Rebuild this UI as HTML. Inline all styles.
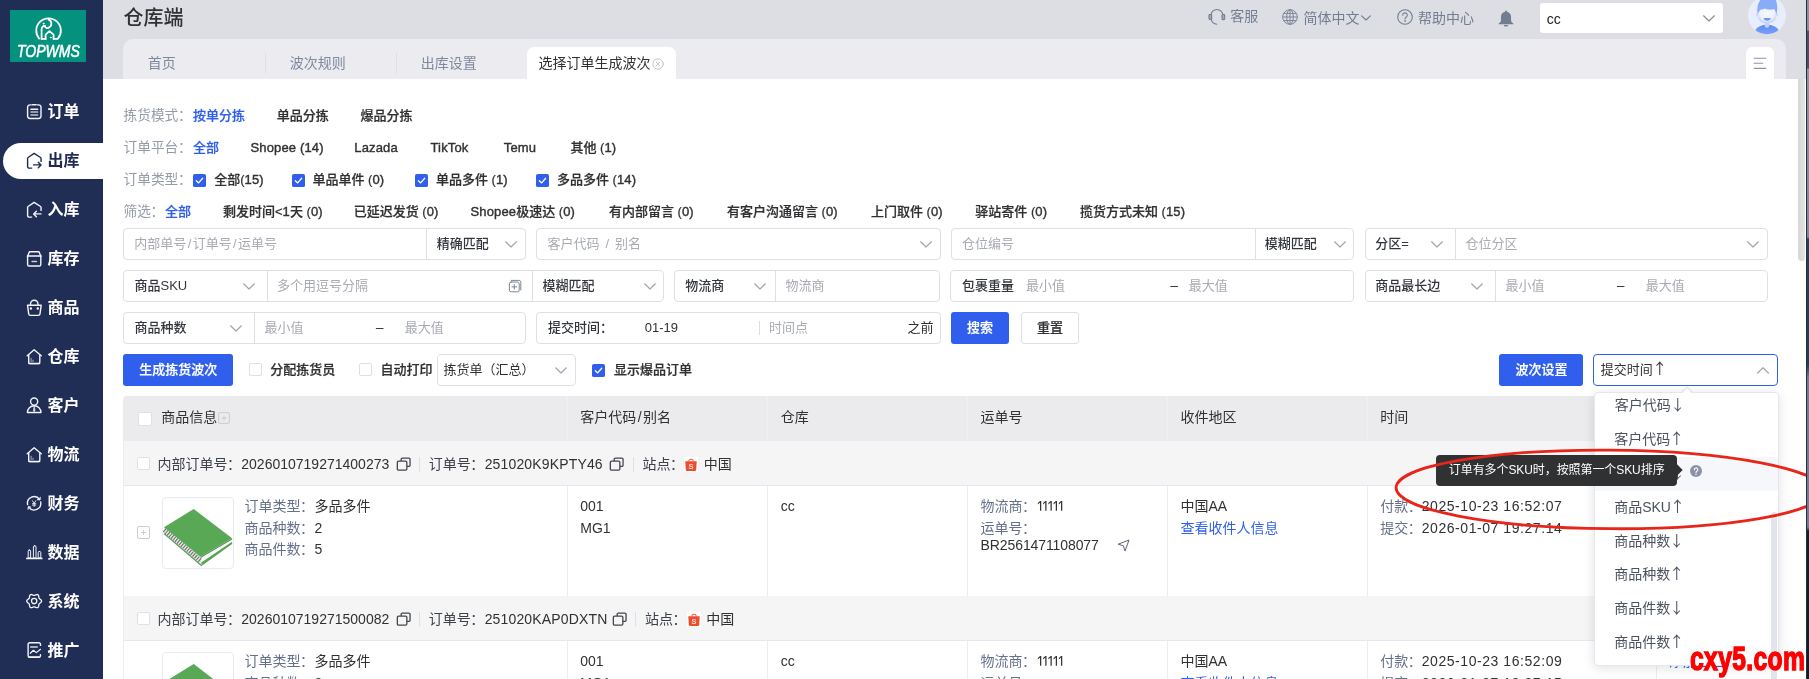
<!DOCTYPE html>
<html lang="zh-CN"><head><meta charset="utf-8"><title>仓库端 - 选择订单生成波次</title>
<style>
html,body{margin:0;padding:0}
body{width:1809px;height:679px;overflow:hidden;position:relative;background:#fff;
 font-family:"Liberation Sans","Noto Sans CJK SC",sans-serif;font-size:13px;color:#303133}
#pg{position:absolute;left:0;top:0;width:1809px;height:679px;overflow:hidden;will-change:transform}
.a{position:absolute}
.t{position:absolute;white-space:nowrap;line-height:20px;height:20px}
.bx{position:absolute;box-sizing:border-box;border:1px solid #dcdfe6;border-radius:4px;background:#fff}
.m{font-weight:500;-webkit-text-stroke:.22px currentColor}
.b{font-weight:700}
.g{color:#959baa;font-size:13.700px}
.bl{color:#2f5fec}
.ph{color:#a8abb2}
.f14{font-size:14px}
.lb{color:#66708a}
.ls{-webkit-text-stroke:.38px currentColor;letter-spacing:.15px}
.g .cl{margin-left:-.4px;margin-right:.4px}
.f14 .cl{margin-left:-.5px;margin-right:.5px}
.sv{font-weight:500;color:#33363c}
.ar{font-family:"Noto Sans CJK SC",sans-serif;margin-left:-.5px;font-size:15px;line-height:1}
.dt{letter-spacing:.56px}
.sl{margin:0 1.400px}
.btn{position:absolute;box-sizing:border-box;border-radius:3px;background:#2f5fec}
</style></head><body><div id="pg">
<div class="a" style="left:0;top:0;width:103px;height:679px;background:#202d54"></div>
<div class="a" style="left:103px;top:0;width:1703px;height:79px;background:#dddee3"></div>
<div class="a" style="left:1806px;top:0;width:3px;height:679px;background:linear-gradient(180deg,#8790a5 0,#8790a5 30px,#4a5070 31px,#4a5070 68px,#8b93a6 69px,#7d87a0 237px,#1d4565 239px,#1b4060 365px,#6f7c9a 378px,#6f7c9a 527px,#10202f 531px,#0e1c2c 679px)"></div>
<div class="a" style="left:1806px;top:0;width:1.300px;height:679px;background:#2b2e36"></div>
<div class="a" style="left:123px;top:39px;width:1663px;height:40px;background:#ebebf0;border-radius:10px 10px 0 0"></div>
<div class="a" style="left:1798.200px;top:79px;width:7.300px;height:182.200px;background:linear-gradient(90deg,#d6d6d6,#e4e4e4);border-radius:0 0 3.600px 3.600px"></div>
<div class="a" style="left:10px;top:10px;width:76px;height:52px;background:#04927f"></div>
<svg class="a" style="left:34px;top:17px" width="29" height="24" viewBox="0 0 29 24" fill="none" stroke="#fff" stroke-width="1.750" stroke-linecap="round" stroke-linejoin="round">
<path d="M5.2 21.6A12.3 12.3 0 1 1 23.9 21.6"/>
<path d="M14.6 2.6c3.6 1.3 3.7 6.2 .2 8.0c-1.8 .9-3.6 .2-3.9-1.2"/>
<path d="M7.6 21.9V12.2c0-2.2 1.6-3.6 3.4-3.4"/>
<path d="M11.6 21.9v-4.2l3.8-3.6l4.2 3.6v4.2"/>
<path d="M7.6 21.9h4M19.6 21.9h3.6"/>
<circle cx="9.6" cy="6.6" r=".6" fill="#fff" stroke-width=".8"/><circle cx="16.8" cy="20.4" r=".5" fill="#fff" stroke-width=".8"/>
</svg>
<span class="t" style="left:17px;top:41.5px;font-size:17px;font-style:italic;color:#fff;transform-origin:0 50%;transform:scaleX(.825);-webkit-text-stroke:.55px #fff;letter-spacing:0">TOPWMS</span>
<div class="a" style="left:3px;top:143px;width:101px;height:36px;background:#fff;border-radius:18px 0 0 18px"></div>
<svg class="a" style="left:26px;top:103px" width="17" height="18" viewBox="0 0 17 18" fill="none" stroke="#f4f5f9" stroke-width="1.400" stroke-linecap="round" stroke-linejoin="round"><path d="M5.200 1.900H4a2.400 2.400 0 0 0-2.400 2.400v8.800a2.400 2.400 0 0 0 2.400 2.400h8.600a2.400 2.400 0 0 0 2.400-2.400V4.300a2.400 2.400 0 0 0-2.400-2.400h-1.200"/><path d="M6.500 1.800h3.600"/><path d="M4.900 6.300h6.800"/><path d="M4.900 9h6.800M4.900 12h6.800" opacity=".75"/></svg>
<span class="t b" style="left:47.6px;top:101.30px;font-size:16px;color:#fff;line-height:22px;height:22px">订单</span>
<svg class="a" style="left:26px;top:152px" width="17" height="18" viewBox="0 0 17 18" fill="none" stroke="#1f2a55" stroke-width="1.400" stroke-linecap="round" stroke-linejoin="round"><path d="M5.700 16.100H3.200a1.600 1.600 0 0 1-1.600-1.600V6.400a1.100 1.100 0 0 1 .5-.9L8.150 1.400l6.400 4.100a1.100 1.100 0 0 1 .5.900V9.400"/><path d="M7.600 12.900h7.100M12.300 10.200l2.700 2.700l-2.700 2.800"/></svg>
<span class="t b" style="left:47.6px;top:150.30px;font-size:16px;color:#1f2a55;line-height:22px;height:22px">出库</span>
<svg class="a" style="left:26px;top:201px" width="17" height="18" viewBox="0 0 17 18" fill="none" stroke="#f4f5f9" stroke-width="1.400" stroke-linecap="round" stroke-linejoin="round"><path d="M5.700 16.100H3.200a1.600 1.600 0 0 1-1.600-1.600V6.400a1.100 1.100 0 0 1 .5-.9L8.150 1.400l6.400 4.100a1.100 1.100 0 0 1 .5.900V9.400"/><path d="M15 12.900H7.900M10.400 10.200l-2.700 2.700l2.700 2.800"/></svg>
<span class="t b" style="left:47.6px;top:199.30px;font-size:16px;color:#fff;line-height:22px;height:22px">入库</span>
<svg class="a" style="left:26px;top:250px" width="17" height="18" viewBox="0 0 17 18" fill="none" stroke="#f4f5f9" stroke-width="1.400" stroke-linecap="round" stroke-linejoin="round"><path d="M1.700 6L3.400 1.800h9.600L14.700 6"/><path d="M1.600 6h13.200" stroke-width="1.700"/><path d="M1.600 6v8.400a1.600 1.600 0 0 0 1.600 1.600h10a1.600 1.600 0 0 0 1.600-1.600V6"/><path d="M6 11.500h4.500" opacity=".8"/></svg>
<span class="t b" style="left:47.6px;top:248.30px;font-size:16px;color:#fff;line-height:22px;height:22px">库存</span>
<svg class="a" style="left:26px;top:299px" width="17" height="18" viewBox="0 0 17 18" fill="none" stroke="#f4f5f9" stroke-width="1.400" stroke-linecap="round" stroke-linejoin="round"><path d="M4.500 6V5a3.750 3.750 0 0 1 7.500 0v1"/><path d="M1.500 6.200h13.700l-1.200 8.700a1.700 1.700 0 0 1-1.700 1.500H4.400a1.700 1.700 0 0 1-1.700-1.500z"/><circle cx="4.900" cy="9.400" r=".55" fill="#f4f5f9"/><circle cx="11.800" cy="9.400" r=".55" fill="#f4f5f9"/></svg>
<span class="t b" style="left:47.6px;top:297.30px;font-size:16px;color:#fff;line-height:22px;height:22px">商品</span>
<svg class="a" style="left:26px;top:348px" width="17" height="18" viewBox="0 0 17 18" fill="none" stroke="#f4f5f9" stroke-width="1.400" stroke-linecap="round" stroke-linejoin="round"><path d="M1.200 7.700L8.150 1.800l7.100 5.900"/><path d="M2.700 6.900v7.300a1.400 1.400 0 0 0 1.400 1.400h8.300a1.400 1.400 0 0 0 1.400-1.400V6.900"/><path d="M3 15.500h10.500" stroke-width="1.600"/><path d="M5.100 10.200v3.400M7 12.200v1.400" stroke-width="1" opacity=".65"/></svg>
<span class="t b" style="left:47.6px;top:346.30px;font-size:16px;color:#fff;line-height:22px;height:22px">仓库</span>
<svg class="a" style="left:26px;top:397px" width="17" height="18" viewBox="0 0 17 18" fill="none" stroke="#f4f5f9" stroke-width="1.400" stroke-linecap="round" stroke-linejoin="round"><circle cx="8.150" cy="4.600" r="3.550"/><path d="M1.400 15.500a6.800 6.800 0 0 1 13.600 0z"/><path d="M8.150 9.300l-.75 4.200l.75 1.200l.75-1.200z" fill="#f4f5f9" stroke-width=".6"/></svg>
<span class="t b" style="left:47.6px;top:395.30px;font-size:16px;color:#fff;line-height:22px;height:22px">客户</span>
<svg class="a" style="left:26px;top:446px" width="17" height="18" viewBox="0 0 17 18" fill="none" stroke="#f4f5f9" stroke-width="1.400" stroke-linecap="round" stroke-linejoin="round"><path d="M1.200 7.700L8.150 1.800l7.100 5.900"/><path d="M2.700 6.900v7.300a1.400 1.400 0 0 0 1.400 1.400h8.300a1.400 1.400 0 0 0 1.400-1.400V6.900"/><path d="M3 15.500h10.500" stroke-width="1.600"/><path d="M5.100 10.200v3.400M7 12.200v1.400" stroke-width="1" opacity=".65"/></svg>
<span class="t b" style="left:47.6px;top:444.30px;font-size:16px;color:#fff;line-height:22px;height:22px">物流</span>
<svg class="a" style="left:26px;top:495px" width="17" height="18" viewBox="0 0 17 18" fill="none" stroke="#f4f5f9" stroke-width="1.400" stroke-linecap="round" stroke-linejoin="round"><path d="M1.600 9.600A6.700 6.700 0 0 1 13.600 4.400"/><path d="M14.700 7A6.700 6.700 0 0 1 2.700 12.200"/><path d="M11.600 4.600l2.300.1l.3-2.300M4.700 12l-2.300-.1l-.3 2.300" stroke-width="1.100"/><path d="M6.400 5.700l1.750 2.500l1.750-2.500M8.150 8.200v3.200M6.500 8.700h3.300M6.500 10.100h3.300" stroke-width="1" opacity=".9"/></svg>
<span class="t b" style="left:47.6px;top:493.30px;font-size:16px;color:#fff;line-height:22px;height:22px">财务</span>
<svg class="a" style="left:26px;top:544px" width="17" height="18" viewBox="0 0 17 18" fill="none" stroke="#f4f5f9" stroke-width="1.400" stroke-linecap="round" stroke-linejoin="round"><path d="M.9 14.400h14.900" stroke-width="1.700"/><rect x="2.200" y="6" width="2.400" height="8" rx="1.100" stroke-width="1"/><rect x="7.400" y="1.700" width="2.600" height="12.300" rx="1.200" stroke-width="1"/><rect x="12.200" y="7.500" width="2.600" height="6.500" rx="1.100" stroke-width="1"/></svg>
<span class="t b" style="left:47.6px;top:542.30px;font-size:16px;color:#fff;line-height:22px;height:22px">数据</span>
<svg class="a" style="left:26px;top:593px" width="17" height="18" viewBox="0 0 17 18" fill="none" stroke="#f4f5f9" stroke-width="1.400" stroke-linecap="round" stroke-linejoin="round"><path d="M15.55 8.10 L15.41 8.74 L15.02 9.31 L14.48 9.80 L13.91 10.19 L13.42 10.56 L13.09 10.95 L12.91 11.43 L12.84 12.04 L12.78 12.73 L12.63 13.44 L12.33 14.07 L11.85 14.51 L11.23 14.70 L10.54 14.65 L9.85 14.43 L9.21 14.13 L8.66 13.89 L8.15 13.80 L7.64 13.89 L7.09 14.13 L6.45 14.43 L5.76 14.65 L5.07 14.70 L4.45 14.51 L3.97 14.07 L3.67 13.44 L3.52 12.73 L3.46 12.04 L3.39 11.43 L3.21 10.95 L2.88 10.56 L2.39 10.19 L1.82 9.80 L1.28 9.31 L0.89 8.74 L0.75 8.10 L0.89 7.46 L1.28 6.89 L1.82 6.40 L2.39 6.01 L2.88 5.64 L3.21 5.25 L3.39 4.77 L3.46 4.16 L3.52 3.47 L3.67 2.76 L3.97 2.13 L4.45 1.69 L5.07 1.50 L5.76 1.55 L6.45 1.77 L7.09 2.07 L7.64 2.31 L8.15 2.40 L8.66 2.31 L9.21 2.07 L9.85 1.77 L10.54 1.55 L11.23 1.50 L11.85 1.69 L12.33 2.13 L12.63 2.76 L12.78 3.47 L12.84 4.16 L12.91 4.77 L13.09 5.25 L13.42 5.64 L13.91 6.01 L14.48 6.40 L15.02 6.89 L15.41 7.46Z" stroke-width="1.300"/><circle cx="8.150" cy="8.100" r="2.650" stroke-width="1.300"/></svg>
<span class="t b" style="left:47.6px;top:591.30px;font-size:16px;color:#fff;line-height:22px;height:22px">系统</span>
<svg class="a" style="left:26px;top:642px" width="17" height="18" viewBox="0 0 17 18" fill="none" stroke="#f4f5f9" stroke-width="1.400" stroke-linecap="round" stroke-linejoin="round"><path d="M14.500 3.400V2.400a1.600 1.600 0 0 0-1.600-1.600H3.700a1.600 1.600 0 0 0-1.600 1.600v11.200a1.600 1.600 0 0 0 1.600 1.600h9.200a1.600 1.600 0 0 0 1.600-1.600v-.8"/><path d="M2.500 15h11" stroke-width="1.600" opacity=".8"/><path d="M4.600 5h6.700" opacity=".85"/><path d="M4.300 11.300l3.100-3l2.900 2.300l4.200-3.300" stroke-width="1.200"/></svg>
<span class="t b" style="left:47.6px;top:640.30px;font-size:16px;color:#fff;line-height:22px;height:22px">推广</span>
<span class="t " style="left:123.5px;top:3.50px;font-size:20px;font-weight:500;color:#303133;line-height:28px;height:28px">仓库端</span>
<svg class="a" style="left:1208px;top:8px" width="18" height="18" viewBox="0 0 18 18" fill="none" stroke="#727d92" stroke-width="1.100" stroke-linecap="round">
<path d="M3 7.400A5.900 5.900 0 0 1 14.800 7.400"/><rect x="1" y="6.500" width="2.700" height="4.900" rx=".9" fill="#a3abba"/><rect x="14" y="6.500" width="2.700" height="5.100" rx=".9" fill="#a3abba"/><path d="M3.300 11.600C4 14.200 6 15.900 8.900 16.200"/></svg>
<span class="t " style="left:1230.2px;top:6.00px;font-size:14px;color:#727d92">客服</span>
<svg class="a" style="left:1281.5px;top:9px" width="16" height="16" viewBox="0 0 16 16" fill="none" stroke="#727d92" stroke-width=".9">
<circle cx="8" cy="8" r="7.300"/><ellipse cx="8" cy="8" rx="3.300" ry="7.300"/><path d="M8 .7v14.600M.7 8h14.600M1.700 4.400h12.600M1.700 11.600h12.600"/></svg>
<span class="t " style="left:1303.5px;top:8.00px;font-size:14px;color:#727d92">简体中文</span>
<svg class="a" style="left:1360.70px;top:15.30px" width="10" height="6.0" viewBox="0 0 10 6.0"><polyline points="0.6,0.8 5.0,5.0 9.4,0.8" fill="none" stroke="#727d92" stroke-width="1.1" stroke-linecap="round" stroke-linejoin="round"/></svg>
<svg class="a" style="left:1396.500px;top:9px" width="16" height="16" viewBox="0 0 16 16" fill="none" stroke="#727d92" stroke-width="1.100" stroke-linecap="round">
<circle cx="8" cy="8" r="7.300"/><path d="M5.700 6.200a2.300 2.300 0 1 1 3.400 2c-.8.500-1.100.9-1.100 1.800"/><circle cx="8" cy="12" r=".5" fill="#727d92" stroke-width=".6"/></svg>
<span class="t " style="left:1417.9px;top:8.00px;font-size:14px;color:#727d92">帮助中心</span>
<svg class="a" style="left:1498.300px;top:9.500px" width="16" height="17" viewBox="0 0 16 17" fill="#727d92">
<path d="M8 .5c.55 0 .95.4.95.95v.3c2.500.5 4.100 2.600 4.100 5.200v3.500c0 .8.450 1.500 1.350 2.200l.9.750v.9H.7v-.9l.9-.750c.9-.7 1.350-1.400 1.350-2.200V6.950c0-2.600 1.600-4.700 4.100-5.200v-.3c0-.55.4-.95.950-.95z"/><path d="M5.700 15.100h4.600a2.300 1.500 0 0 1-4.600 0z"/></svg>
<div class="a" style="left:1540px;top:3px;width:183px;height:30px;background:#fff;border-radius:3px"></div>
<span class="t " style="left:1546.7px;top:9.00px;font-size:14px;color:#222">cc</span>
<svg class="a" style="left:1703.00px;top:14.60px" width="12" height="7.0" viewBox="0 0 12 7.0"><polyline points="0.6,0.8 6.0,6.0 11.4,0.8" fill="none" stroke="#8a8e96" stroke-width="1.2" stroke-linecap="round" stroke-linejoin="round"/></svg>
<svg class="a" style="left:1748px;top:0" width="38" height="35" viewBox="0 0 38 35">
<defs><clipPath id="av"><circle cx="19" cy="15.200" r="19"/></clipPath>
<linearGradient id="avb" x1="0" y1="0" x2="0" y2="1"><stop offset="0" stop-color="#5f8bf5"/><stop offset="1" stop-color="#8db0f9"/></linearGradient>
<radialGradient id="avf" cx=".5" cy=".38" r=".62"><stop offset="0" stop-color="#f6f8ff"/><stop offset=".6" stop-color="#eef2fe"/><stop offset="1" stop-color="#b9ccfa"/></radialGradient></defs>
<g clip-path="url(#av)"><rect x="0" y="-4" width="38" height="40" fill="#e8eefe"/>
<ellipse cx="19" cy="33.200" rx="12.200" ry="8.600" fill="url(#avb)"/>
<rect x="16.700" y="22.500" width="4.600" height="5.200" rx="2.200" fill="#c3d3fb"/>
<circle cx="9.300" cy="14.700" r="1.500" fill="#cfdcfc"/><circle cx="28.700" cy="14.700" r="1.500" fill="#cfdcfc"/>
<ellipse cx="19" cy="15.400" rx="9.500" ry="8.300" fill="url(#avf)"/>
<path d="M9.700 14.600C8.300 8 10.400 2.400 12 .6L11.400-3H26c3.400 4.400 4 11 2.400 17.600c-.5-2.600-1.300-4.200-2.400-5.500c-3.600 1.300-7.400.6-9.600-.5c-1 .9-2 1-3 .7c-1.900 1-3 2.900-3.700 5.300z" fill="#8aacf7"/>
<path d="M15.600 18.100h7.200c-.4 1.800-1.800 2.700-3.600 2.700s-3.200-.9-3.600-2.700z" fill="#6c95f5"/>
</g></svg>
<span class="t " style="left:147.8px;top:53.20px;font-size:14px;color:#7e899e">首页</span>
<div class="a" style="left:265px;top:53px;width:1px;height:20px;background:#dedee6"></div>
<span class="t " style="left:289.7px;top:53.20px;font-size:14px;color:#7e899e">波次规则</span>
<div class="a" style="left:396px;top:53px;width:1px;height:20px;background:#dedee6"></div>
<span class="t " style="left:420.7px;top:53.20px;font-size:14px;color:#7e899e">出库设置</span>
<div class="a" style="left:527px;top:47px;width:149px;height:32px;background:#fff;border-radius:7px 7px 0 0"></div>
<span class="t " style="left:538.5px;top:53.20px;font-size:14px;color:#303133">选择订单生成波次</span>
<svg class="a" style="left:651.500px;top:57.500px" width="12" height="12" viewBox="0 0 12 12" fill="none" stroke="#b9bec9" stroke-width=".9" stroke-linecap="round"><circle cx="6" cy="6" r="5.200"/><path d="M4.100 4.100l3.800 3.800M7.900 4.100l-3.800 3.800"/></svg>
<div class="a" style="left:1746px;top:47px;width:28px;height:32px;background:#fff;border-radius:6px 6px 0 0"></div>
<svg class="a" style="left:1753px;top:56px" width="14" height="14" viewBox="0 0 14 14" fill="none" stroke="#8c95a6" stroke-width="1.100" stroke-linecap="round"><path d="M1.200 2.200h11.600M1.200 7.300h8.600M1.200 12.400h11.600"/></svg>
<span class="t g" style="left:123.5px;top:106.00px;">拣货模式<span class="cl">：</span></span>
<span class="t m bl" style="left:193px;top:106.00px;">按单分拣</span>
<span class="t m" style="left:276.75px;top:106.00px;">单品分拣</span>
<span class="t m" style="left:360.5px;top:106.00px;">爆品分拣</span>
<span class="t g" style="left:123.5px;top:138.00px;">订单平台<span class="cl">：</span></span>
<span class="t m bl" style="left:193px;top:138.00px;">全部</span>
<span class="t m lat" style="left:250.5px;top:138.00px;"><span class="ls">Shopee (14)</span></span>
<span class="t m lat" style="left:354.25px;top:138.00px;"><span class="ls">Lazada</span></span>
<span class="t m lat" style="left:430.5px;top:138.00px;letter-spacing:.6px"><span class="ls">TikTok</span></span>
<span class="t m lat" style="left:503.75px;top:138.00px;letter-spacing:.5px"><span class="ls">Temu</span></span>
<span class="t m" style="left:570.5px;top:138.00px;">其他 (<span class="ls">1)</span></span>
<span class="t g" style="left:123.5px;top:170.00px;">订单类型<span class="cl">：</span></span>
<svg class="a" style="left:193px;top:173.5px" width="13" height="13" viewBox="0 0 14 14"><rect x="0" y="0" width="14" height="14" rx="2" fill="#2f5fec"/><polyline points="3.6,7.2 6.1,9.6 10.4,4.6" fill="none" stroke="#fff" stroke-width="1.4" stroke-linecap="round" stroke-linejoin="round"/></svg>
<span class="t m" style="left:214.25px;top:170.00px;">全部(<span class="ls">15)</span></span>
<svg class="a" style="left:291.5px;top:173.5px" width="13" height="13" viewBox="0 0 14 14"><rect x="0" y="0" width="14" height="14" rx="2" fill="#2f5fec"/><polyline points="3.6,7.2 6.1,9.6 10.4,4.6" fill="none" stroke="#fff" stroke-width="1.4" stroke-linecap="round" stroke-linejoin="round"/></svg>
<span class="t m" style="left:312.5px;top:170.00px;">单品单件 (<span class="ls">0)</span></span>
<svg class="a" style="left:415px;top:173.5px" width="13" height="13" viewBox="0 0 14 14"><rect x="0" y="0" width="14" height="14" rx="2" fill="#2f5fec"/><polyline points="3.6,7.2 6.1,9.6 10.4,4.6" fill="none" stroke="#fff" stroke-width="1.4" stroke-linecap="round" stroke-linejoin="round"/></svg>
<span class="t m" style="left:436px;top:170.00px;">单品多件 (<span class="ls">1)</span></span>
<svg class="a" style="left:536px;top:173.5px" width="13" height="13" viewBox="0 0 14 14"><rect x="0" y="0" width="14" height="14" rx="2" fill="#2f5fec"/><polyline points="3.6,7.2 6.1,9.6 10.4,4.6" fill="none" stroke="#fff" stroke-width="1.4" stroke-linecap="round" stroke-linejoin="round"/></svg>
<span class="t m" style="left:557px;top:170.00px;">多品多件 (<span class="ls">14)</span></span>
<span class="t g" style="left:123.5px;top:202.00px;">筛选<span class="cl">：</span></span>
<span class="t m bl" style="left:165px;top:202.00px;">全部</span>
<span class="t m" style="left:223px;top:202.00px;">剩发时间&lt;<span class="ls">1</span>天 (<span class="ls">0)</span></span>
<span class="t m" style="left:353.75px;top:202.00px;">已延迟发货 (<span class="ls">0)</span></span>
<span class="t m" style="left:470.5px;top:202.00px;"><span class="ls">Shopee</span>极速达 (<span class="ls">0)</span></span>
<span class="t m" style="left:609px;top:202.00px;">有内部留言 (<span class="ls">0)</span></span>
<span class="t m" style="left:727px;top:202.00px;">有客户沟通留言 (<span class="ls">0)</span></span>
<span class="t m" style="left:871px;top:202.00px;">上门取件 (<span class="ls">0)</span></span>
<span class="t m" style="left:975.3px;top:202.00px;">驿站寄件 (<span class="ls">0)</span></span>
<span class="t m" style="left:1080px;top:202.00px;">揽货方式未知 (<span class="ls">15)</span></span>
<div class="bx" style="left:123px;top:228px;width:403px;height:32px;"></div>
<div class="a" style="left:426px;top:229px;width:1px;height:30px;background:#dcdfe6"></div>
<span class="t ph" style="left:134.25px;top:234.10px;">内部单号<span class="sl">/</span>订单号<span class="sl">/</span>运单号</span>
<span class="t sv" style="left:436.8px;top:234.10px;">精确匹配</span>
<svg class="a" style="left:505.00px;top:240.70px" width="12" height="7.0" viewBox="0 0 12 7.0"><polyline points="0.6,0.8 6.0,6.0 11.4,0.8" fill="none" stroke="#a3a6ad" stroke-width="1.2" stroke-linecap="round" stroke-linejoin="round"/></svg>
<div class="bx" style="left:536px;top:228px;width:405px;height:32px;"></div>
<span class="t ph" style="left:547.5px;top:234.10px;word-spacing:2.300px">客户代码 / 别名</span>
<svg class="a" style="left:919.70px;top:240.70px" width="12" height="7.0" viewBox="0 0 12 7.0"><polyline points="0.6,0.8 6.0,6.0 11.4,0.8" fill="none" stroke="#a3a6ad" stroke-width="1.2" stroke-linecap="round" stroke-linejoin="round"/></svg>
<div class="bx" style="left:951px;top:228px;width:403px;height:32px;"></div>
<div class="a" style="left:1255px;top:229px;width:1px;height:30px;background:#dcdfe6"></div>
<span class="t ph" style="left:962px;top:234.10px;">仓位编号</span>
<span class="t sv" style="left:1264.8px;top:234.10px;">模糊匹配</span>
<svg class="a" style="left:1333.50px;top:240.70px" width="12" height="7.0" viewBox="0 0 12 7.0"><polyline points="0.6,0.8 6.0,6.0 11.4,0.8" fill="none" stroke="#a3a6ad" stroke-width="1.2" stroke-linecap="round" stroke-linejoin="round"/></svg>
<div class="bx" style="left:1365px;top:228px;width:403px;height:32px;"></div>
<div class="a" style="left:1455px;top:229px;width:1px;height:30px;background:#dcdfe6"></div>
<span class="t sv" style="left:1375.3px;top:234.10px;">分区=</span>
<svg class="a" style="left:1431.00px;top:240.70px" width="12" height="7.0" viewBox="0 0 12 7.0"><polyline points="0.6,0.8 6.0,6.0 11.4,0.8" fill="none" stroke="#a3a6ad" stroke-width="1.2" stroke-linecap="round" stroke-linejoin="round"/></svg>
<span class="t ph" style="left:1465.4px;top:234.10px;">仓位分区</span>
<svg class="a" style="left:1747.00px;top:240.70px" width="12" height="7.0" viewBox="0 0 12 7.0"><polyline points="0.6,0.8 6.0,6.0 11.4,0.8" fill="none" stroke="#a3a6ad" stroke-width="1.2" stroke-linecap="round" stroke-linejoin="round"/></svg>
<div class="bx" style="left:123px;top:270px;width:541px;height:32px;"></div>
<div class="a" style="left:267px;top:271px;width:1px;height:30px;background:#dcdfe6"></div>
<div class="a" style="left:532px;top:271px;width:1px;height:30px;background:#dcdfe6"></div>
<span class="t sv" style="left:134.5px;top:276.10px;">商品SKU</span>
<svg class="a" style="left:243.00px;top:282.70px" width="12" height="7.0" viewBox="0 0 12 7.0"><polyline points="0.6,0.8 6.0,6.0 11.4,0.8" fill="none" stroke="#a3a6ad" stroke-width="1.2" stroke-linecap="round" stroke-linejoin="round"/></svg>
<span class="t ph" style="left:277px;top:276.10px;">多个用逗号分隔</span>
<svg class="a" style="left:508px;top:279.1px" width="14" height="14" viewBox="0 0 14 14" fill="none" stroke="#7d8596" stroke-width="1" stroke-linecap="round"><path d="M3.200 1.400h7.600a2 2 0 0 1 2 2v7.600"/><rect x="1.400" y="3" width="9.800" height="9.800" rx="1.800"/><path d="M6.300 5.600v4.600M4 7.900h4.600"/></svg>
<span class="t sv" style="left:542.5px;top:276.10px;">模糊匹配</span>
<svg class="a" style="left:643.50px;top:282.70px" width="12" height="7.0" viewBox="0 0 12 7.0"><polyline points="0.6,0.8 6.0,6.0 11.4,0.8" fill="none" stroke="#a3a6ad" stroke-width="1.2" stroke-linecap="round" stroke-linejoin="round"/></svg>
<div class="bx" style="left:674px;top:270px;width:266px;height:32px;"></div>
<div class="a" style="left:775px;top:271px;width:1px;height:30px;background:#dcdfe6"></div>
<span class="t sv" style="left:685.3px;top:276.10px;">物流商</span>
<svg class="a" style="left:754.00px;top:282.70px" width="12" height="7.0" viewBox="0 0 12 7.0"><polyline points="0.6,0.8 6.0,6.0 11.4,0.8" fill="none" stroke="#a3a6ad" stroke-width="1.2" stroke-linecap="round" stroke-linejoin="round"/></svg>
<span class="t ph" style="left:785.5px;top:276.10px;">物流商</span>
<div class="bx" style="left:950px;top:270px;width:404px;height:32px;"></div>
<span class="t sv" style="left:962px;top:276.10px;">包裹重量</span>
<span class="t ph" style="left:1026px;top:276.10px;">最小值</span>
<span class="t m" style="left:1170.4px;top:276.10px;">–</span>
<span class="t ph" style="left:1188.7px;top:276.10px;">最大值</span>
<div class="bx" style="left:1365px;top:270px;width:403px;height:32px;"></div>
<div class="a" style="left:1495px;top:271px;width:1px;height:30px;background:#dcdfe6"></div>
<span class="t sv" style="left:1375.3px;top:276.10px;">商品最长边</span>
<svg class="a" style="left:1471.00px;top:282.70px" width="12" height="7.0" viewBox="0 0 12 7.0"><polyline points="0.6,0.8 6.0,6.0 11.4,0.8" fill="none" stroke="#a3a6ad" stroke-width="1.2" stroke-linecap="round" stroke-linejoin="round"/></svg>
<span class="t ph" style="left:1505.5px;top:276.10px;">最小值</span>
<span class="t m" style="left:1617px;top:276.10px;">–</span>
<span class="t ph" style="left:1645.7px;top:276.10px;">最大值</span>
<div class="bx" style="left:123px;top:312px;width:403px;height:32px;"></div>
<div class="a" style="left:254px;top:313px;width:1px;height:30px;background:#dcdfe6"></div>
<span class="t sv" style="left:134.5px;top:318.10px;">商品种数</span>
<svg class="a" style="left:229.70px;top:324.70px" width="12" height="7.0" viewBox="0 0 12 7.0"><polyline points="0.6,0.8 6.0,6.0 11.4,0.8" fill="none" stroke="#a3a6ad" stroke-width="1.2" stroke-linecap="round" stroke-linejoin="round"/></svg>
<span class="t ph" style="left:264.5px;top:318.10px;">最小值</span>
<span class="t m" style="left:376px;top:318.10px;">–</span>
<span class="t ph" style="left:404.8px;top:318.10px;">最大值</span>
<div class="bx" style="left:536px;top:312px;width:405px;height:32px;"></div>
<span class="t sv" style="left:548px;top:318.10px;">提交时间<span class="cl">：</span></span>
<span class="t " style="left:644.7px;top:318.10px;color:#303133">01-19</span>
<div class="a" style="left:759px;top:321px;width:1px;height:14px;background:#dcdfe6"></div>
<span class="t ph" style="left:769px;top:318.10px;">时间点</span>
<span class="t " style="left:907.4px;top:318.10px;color:#303133">之前</span>
<div class="btn" style="left:951px;top:312px;width:58px;height:32px"></div>
<span class="t m" style="left:967px;top:318.10px;color:#fff">搜索</span>
<div class="bx" style="left:1021px;top:312px;width:58px;height:32px;border-radius:3px"></div>
<span class="t m" style="left:1037px;top:318.10px;">重置</span>
<div class="btn" style="left:123px;top:354px;width:110px;height:32px"></div>
<span class="t m" style="left:139.3px;top:360.10px;color:#fff">生成拣货波次</span>
<div class="a" style="left:249.3px;top:363.4px;width:11px;height:11px;border:1px solid #dcdfe6;border-radius:2px;background:#fff"></div>
<span class="t m" style="left:270.3px;top:360.10px;">分配拣货员</span>
<div class="a" style="left:359px;top:363.4px;width:11px;height:11px;border:1px solid #dcdfe6;border-radius:2px;background:#fff"></div>
<span class="t m" style="left:380.5px;top:360.10px;">自动打印</span>
<div class="bx" style="left:437px;top:354px;width:139px;height:32px;"></div>
<span class="t " style="left:443.6px;top:360.10px;color:#303133">拣货单（汇总）</span>
<svg class="a" style="left:555.30px;top:366.70px" width="12" height="7.0" viewBox="0 0 12 7.0"><polyline points="0.6,0.8 6.0,6.0 11.4,0.8" fill="none" stroke="#a3a6ad" stroke-width="1.2" stroke-linecap="round" stroke-linejoin="round"/></svg>
<svg class="a" style="left:592.2px;top:363.6px" width="13" height="13" viewBox="0 0 14 14"><rect x="0" y="0" width="14" height="14" rx="2" fill="#2f5fec"/><polyline points="3.6,7.2 6.1,9.6 10.4,4.6" fill="none" stroke="#fff" stroke-width="1.4" stroke-linecap="round" stroke-linejoin="round"/></svg>
<span class="t m" style="left:614px;top:360.10px;">显示爆品订单</span>
<div class="btn" style="left:1499px;top:354px;width:84px;height:32px"></div>
<span class="t m" style="left:1515.5px;top:360.10px;color:#fff">波次设置</span>
<div class="bx" style="left:1593px;top:354px;width:185px;height:32px;border-color:#2f5fec"></div>
<span class="t " style="left:1600.7px;top:360.10px;color:#303133">提交时间<span class="ar">↑</span></span>
<svg class="a" style="left:1756.70px;top:366.70px" width="12" height="7.0" viewBox="0 0 12 7.0"><polyline points="0.6,6.0 6.0,0.8 11.4,6.0" fill="none" stroke="#a3a6ad" stroke-width="1.2" stroke-linecap="round" stroke-linejoin="round"/></svg>
<div class="a" style="left:123px;top:396px;width:1655px;height:45px;background:#ebebed;border-radius:4px 4px 0 0"></div>
<div class="a" style="left:567px;top:396px;width:1px;height:45px;background:#f0f0f3"></div>
<div class="a" style="left:767px;top:396px;width:1px;height:45px;background:#f0f0f3"></div>
<div class="a" style="left:967px;top:396px;width:1px;height:45px;background:#f0f0f3"></div>
<div class="a" style="left:1167px;top:396px;width:1px;height:45px;background:#f0f0f3"></div>
<div class="a" style="left:1367px;top:396px;width:1px;height:45px;background:#f0f0f3"></div>
<div class="a" style="left:1656px;top:396px;width:1px;height:45px;background:#f0f0f3"></div>
<div class="a" style="left:138px;top:411.5px;width:12px;height:12px;border:1px solid #dcdfe6;border-radius:2px;background:#fff"></div>
<span class="t f14" style="left:161.3px;top:407.00px;">商品信息</span>
<svg class="a" style="left:218px;top:412px" width="12" height="12" viewBox="0 0 12 12" fill="none" stroke="#c3c7d0" stroke-width=".9"><rect x=".6" y=".6" width="10.800" height="10.800" rx="1.500"/><path d="M6 3.600v4.800M3.600 6h4.800"/></svg>
<span class="t f14" style="left:580.3px;top:407.00px;">客户代码<span class="sl">/</span>别名</span>
<span class="t f14" style="left:780.7px;top:407.00px;">仓库</span>
<span class="t f14" style="left:980.6px;top:407.00px;">运单号</span>
<span class="t f14" style="left:1180.4px;top:407.00px;">收件地区</span>
<span class="t f14" style="left:1380.3px;top:407.00px;">时间</span>
<span class="t f14" style="left:1669px;top:407.00px;">操作</span>
<div class="a" style="left:123px;top:441px;width:1655px;height:45px;background:#f5f5f6"></div>
<div class="a" style="left:123px;top:485.4px;width:1655px;height:1px;background:#e6e8f1"></div>
<div class="a" style="left:136.500px;top:457.3px;width:11px;height:11px;border:1px solid #dfe1e8;border-radius:2px;background:#fff"></div>
<span class="t f14" style="left:157.6px;top:453.90px;color:#3c4048">内部订单号<span class="cl">：</span></span>
<span class="t f14 num" style="left:241.3px;top:453.90px;">2026010719271400273</span>
<svg class="a" style="left:395.5px;top:456.5px" width="15.500" height="14.500" viewBox="0 0 15 15" preserveAspectRatio="none" fill="none" stroke="#41454f" stroke-width="1.250" stroke-linejoin="round"><path d="M5 4.200V2.400a1.200 1.200 0 0 1 1.200-1.200h6.200a1.200 1.200 0 0 1 1.200 1.200v6.200a1.200 1.200 0 0 1-1.200 1.200H10.600"/><rect x="1.300" y="4.300" width="9.200" height="9.200" rx="1.200"/></svg>
<div class="a" style="left:419.4px;top:457px;width:1px;height:15px;background:#dfe1e8"></div>
<span class="t f14" style="left:428.8px;top:453.90px;color:#3c4048">订单号<span class="cl">：</span></span>
<span class="t f14 num" style="left:484.7px;top:453.90px;letter-spacing:.15px">251020K9KPTY46</span>
<svg class="a" style="left:609px;top:456.5px" width="15.500" height="14.500" viewBox="0 0 15 15" preserveAspectRatio="none" fill="none" stroke="#41454f" stroke-width="1.250" stroke-linejoin="round"><path d="M5 4.200V2.400a1.200 1.200 0 0 1 1.200-1.200h6.200a1.200 1.200 0 0 1 1.200 1.200v6.200a1.200 1.200 0 0 1-1.200 1.200H10.600"/><rect x="1.300" y="4.300" width="9.200" height="9.200" rx="1.200"/></svg>
<div class="a" style="left:632.5px;top:457px;width:1px;height:15px;background:#dfe1e8"></div>
<span class="t f14" style="left:642.5px;top:453.90px;color:#3c4048">站点<span class="cl">：</span></span>
<svg class="a" style="left:684px;top:456.5px" width="14" height="15" viewBox="0 0 14 15"><rect x="0" y="0" width="14" height="15" fill="#fff"/><path d="M4.700 4.400a2.300 2.300 0 0 1 4.600 0" fill="none" stroke="#ee4d2d" stroke-width="1"/><path d="M1.300 4.200h11.400l-.5 8.600a1.400 1.400 0 0 1-1.400 1.300H3.200a1.400 1.400 0 0 1-1.400-1.300z" fill="#ee4d2d"/><text x="7" y="12" font-family="Liberation Sans,sans-serif" font-size="7.500" font-weight="700" fill="#ffd9cf" text-anchor="middle">S</text></svg>
<span class="t f14" style="left:703.8px;top:453.90px;">中国</span>
<div class="a" style="left:567px;top:486px;width:1px;height:110px;background:#ebedf5"></div>
<div class="a" style="left:767px;top:486px;width:1px;height:110px;background:#ebedf5"></div>
<div class="a" style="left:967px;top:486px;width:1px;height:110px;background:#ebedf5"></div>
<div class="a" style="left:1167px;top:486px;width:1px;height:110px;background:#ebedf5"></div>
<div class="a" style="left:1367px;top:486px;width:1px;height:110px;background:#ebedf5"></div>
<div class="a" style="left:1656px;top:486px;width:1px;height:110px;background:#ebedf5"></div>
<svg class="a" style="left:137.4px;top:525.5px" width="13" height="13" viewBox="0 0 13 13" fill="none" stroke="#c3c7d1" stroke-width=".9"><rect x=".5" y=".5" width="12" height="12" rx="1.500"/><path d="M6.500 4v5M4 6.500h5"/></svg>
<div class="a" style="left:162px;top:496.7px;width:70px;height:70px;border:1px solid #e9eaf2;border-radius:4px;background:#fff"></div>
<svg class="a" style="left:162px;top:496.7px" width="72" height="72" viewBox="0 0 72 72">
<path d="M2 30.300L38.400 59.800L39.700 68.700L2 36.500z" fill="#e4e6e4"/>
<path d="M38.400 59.800L70.100 41.300V47L39.700 68.700z" fill="#fbfbfb"/>
<path d="M39.300 65.600L70.100 44.700V47L39.700 68.700z" fill="#55a353"/>
<path d="M38.400 59.800L70.100 41.300V42.400L38.600 61z" fill="#4a9448"/>
<path d="M2.300 33L38.700 63.600" stroke="#4b514b" stroke-width="4.600" stroke-dasharray="1 1.550" fill="none" opacity=".85"/>
<path d="M2 36.500L39.700 68.700" stroke="#5a9f58" stroke-width="1.200" fill="none"/>
<path d="M31.700 12.100L70.100 41.300L38.400 59.800L2 30.300z" fill="#58a856"/>
</svg>
<span class="t f14 lb" style="left:244.5px;top:495.50px;">订单类型<span class="cl">：</span></span>
<span class="t f14" style="left:314.6px;top:495.50px;">多品多件</span>
<span class="t f14 lb" style="left:244.5px;top:517.50px;">商品种数<span class="cl">：</span></span>
<span class="t f14" style="left:314.6px;top:517.50px;">2</span>
<span class="t f14 lb" style="left:244.5px;top:539.30px;">商品件数<span class="cl">：</span></span>
<span class="t f14" style="left:314.6px;top:539.30px;">5</span>
<span class="t f14" style="left:580.3px;top:495.50px;">001</span>
<span class="t f14" style="left:580.3px;top:517.50px;">MG1</span>
<span class="t f14" style="left:780.7px;top:495.50px;">cc</span>
<span class="t f14 lb" style="left:980.6px;top:495.50px;">物流商<span class="cl">：</span></span>
<span class="t f14" style="left:1036.4px;top:495.50px;letter-spacing:-1.450px;clip-path:inset(0 0 6.600px 0);transform-origin:0 4.850px;transform:scaleY(1.170)">11111</span>
<span class="t f14 lb" style="left:980.6px;top:517.50px;">运单号<span class="cl">：</span></span>
<span class="t f14 num2" style="left:980.6px;top:534.70px;letter-spacing:-.1px">BR2561471108077</span>
<svg class="a" style="left:1116.5px;top:539px" width="13" height="13" viewBox="0 0 13 13" fill="none" stroke="#5d6472" stroke-width="1" stroke-linejoin="round"><path d="M12 1L1.200 5.200l5.200 1.600L8 12z"/></svg>
<span class="t f14" style="left:1180.4px;top:495.50px;">中国AA</span>
<span class="t f14 bl" style="left:1180.4px;top:518.00px;">查看收件人信息</span>
<span class="t f14 lb" style="left:1380.3px;top:495.50px;">付款<span class="cl">：</span></span>
<span class="t f14 dt" style="left:1421.7px;top:495.50px;">2025-10-23 16:52:07</span>
<span class="t f14 lb" style="left:1380.3px;top:517.50px;">提交<span class="cl">：</span></span>
<span class="t f14 dt" style="left:1421.7px;top:517.50px;">2026-01-07 19:27:14</span>
<div class="a" style="left:123px;top:596px;width:1655px;height:45px;background:#f5f5f6"></div>
<div class="a" style="left:123px;top:640.4px;width:1655px;height:1px;background:#e6e8f1"></div>
<div class="a" style="left:136.500px;top:612.3px;width:11px;height:11px;border:1px solid #dfe1e8;border-radius:2px;background:#fff"></div>
<span class="t f14" style="left:157.6px;top:608.90px;color:#3c4048">内部订单号<span class="cl">：</span></span>
<span class="t f14 num" style="left:241.3px;top:608.90px;">2026010719271500082</span>
<svg class="a" style="left:395.5px;top:611.5px" width="15.500" height="14.500" viewBox="0 0 15 15" preserveAspectRatio="none" fill="none" stroke="#41454f" stroke-width="1.250" stroke-linejoin="round"><path d="M5 4.200V2.400a1.200 1.200 0 0 1 1.200-1.200h6.200a1.200 1.200 0 0 1 1.200 1.200v6.200a1.200 1.200 0 0 1-1.200 1.200H10.600"/><rect x="1.300" y="4.300" width="9.200" height="9.200" rx="1.200"/></svg>
<div class="a" style="left:419.4px;top:612px;width:1px;height:15px;background:#dfe1e8"></div>
<span class="t f14" style="left:428.8px;top:608.90px;color:#3c4048">订单号<span class="cl">：</span></span>
<span class="t f14 num" style="left:484.7px;top:608.90px;letter-spacing:.15px">251020KAP0DXTN</span>
<svg class="a" style="left:611.5px;top:611.5px" width="15.500" height="14.500" viewBox="0 0 15 15" preserveAspectRatio="none" fill="none" stroke="#41454f" stroke-width="1.250" stroke-linejoin="round"><path d="M5 4.200V2.400a1.200 1.200 0 0 1 1.200-1.200h6.200a1.200 1.200 0 0 1 1.200 1.200v6.200a1.200 1.200 0 0 1-1.200 1.200H10.600"/><rect x="1.300" y="4.300" width="9.200" height="9.200" rx="1.200"/></svg>
<div class="a" style="left:635.0px;top:612px;width:1px;height:15px;background:#dfe1e8"></div>
<span class="t f14" style="left:645.0px;top:608.90px;color:#3c4048">站点<span class="cl">：</span></span>
<svg class="a" style="left:686.5px;top:611.5px" width="14" height="15" viewBox="0 0 14 15"><rect x="0" y="0" width="14" height="15" fill="#fff"/><path d="M4.700 4.400a2.300 2.300 0 0 1 4.600 0" fill="none" stroke="#ee4d2d" stroke-width="1"/><path d="M1.300 4.200h11.400l-.5 8.600a1.400 1.400 0 0 1-1.400 1.300H3.200a1.400 1.400 0 0 1-1.400-1.300z" fill="#ee4d2d"/><text x="7" y="12" font-family="Liberation Sans,sans-serif" font-size="7.500" font-weight="700" fill="#ffd9cf" text-anchor="middle">S</text></svg>
<span class="t f14" style="left:706.3px;top:608.90px;">中国</span>
<div class="a" style="left:567px;top:641px;width:1px;height:110px;background:#ebedf5"></div>
<div class="a" style="left:767px;top:641px;width:1px;height:110px;background:#ebedf5"></div>
<div class="a" style="left:967px;top:641px;width:1px;height:110px;background:#ebedf5"></div>
<div class="a" style="left:1167px;top:641px;width:1px;height:110px;background:#ebedf5"></div>
<div class="a" style="left:1367px;top:641px;width:1px;height:110px;background:#ebedf5"></div>
<div class="a" style="left:1656px;top:641px;width:1px;height:110px;background:#ebedf5"></div>
<svg class="a" style="left:137.4px;top:680.5px" width="13" height="13" viewBox="0 0 13 13" fill="none" stroke="#c3c7d1" stroke-width=".9"><rect x=".5" y=".5" width="12" height="12" rx="1.500"/><path d="M6.500 4v5M4 6.500h5"/></svg>
<div class="a" style="left:162px;top:651.7px;width:70px;height:70px;border:1px solid #e9eaf2;border-radius:4px;background:#fff"></div>
<svg class="a" style="left:162px;top:651.7px" width="72" height="72" viewBox="0 0 72 72">
<path d="M2 30.300L38.400 59.800L39.700 68.700L2 36.500z" fill="#e4e6e4"/>
<path d="M38.400 59.800L70.100 41.300V47L39.700 68.700z" fill="#fbfbfb"/>
<path d="M39.300 65.600L70.100 44.700V47L39.700 68.700z" fill="#55a353"/>
<path d="M38.400 59.800L70.100 41.300V42.400L38.600 61z" fill="#4a9448"/>
<path d="M2.300 33L38.700 63.600" stroke="#4b514b" stroke-width="4.600" stroke-dasharray="1 1.550" fill="none" opacity=".85"/>
<path d="M2 36.500L39.700 68.700" stroke="#5a9f58" stroke-width="1.200" fill="none"/>
<path d="M31.700 12.100L70.100 41.300L38.400 59.800L2 30.300z" fill="#58a856"/>
</svg>
<span class="t f14 lb" style="left:244.5px;top:650.50px;">订单类型<span class="cl">：</span></span>
<span class="t f14" style="left:314.6px;top:650.50px;">多品多件</span>
<span class="t f14 lb" style="left:244.5px;top:672.50px;">商品种数<span class="cl">：</span></span>
<span class="t f14" style="left:314.6px;top:672.50px;">2</span>
<span class="t f14 lb" style="left:244.5px;top:694.30px;">商品件数<span class="cl">：</span></span>
<span class="t f14" style="left:314.6px;top:694.30px;">5</span>
<span class="t f14" style="left:580.3px;top:650.50px;">001</span>
<span class="t f14" style="left:580.3px;top:672.50px;">MG1</span>
<span class="t f14" style="left:780.7px;top:650.50px;">cc</span>
<span class="t f14 lb" style="left:980.6px;top:650.50px;">物流商<span class="cl">：</span></span>
<span class="t f14" style="left:1036.4px;top:650.50px;letter-spacing:-1.450px;clip-path:inset(0 0 6.600px 0);transform-origin:0 4.850px;transform:scaleY(1.170)">11111</span>
<span class="t f14 lb" style="left:980.6px;top:672.50px;">运单号<span class="cl">：</span></span>
<span class="t f14 num2" style="left:980.6px;top:689.70px;letter-spacing:-.1px">BR2561471108077</span>
<svg class="a" style="left:1116.5px;top:694px" width="13" height="13" viewBox="0 0 13 13" fill="none" stroke="#5d6472" stroke-width="1" stroke-linejoin="round"><path d="M12 1L1.200 5.200l5.200 1.600L8 12z"/></svg>
<span class="t f14" style="left:1180.4px;top:650.50px;">中国AA</span>
<span class="t f14 bl" style="left:1180.4px;top:673.00px;">查看收件人信息</span>
<span class="t f14 lb" style="left:1380.3px;top:650.50px;">付款<span class="cl">：</span></span>
<span class="t f14 dt" style="left:1421.7px;top:650.50px;">2025-10-23 16:52:09</span>
<span class="t f14 lb" style="left:1380.3px;top:672.50px;">提交<span class="cl">：</span></span>
<span class="t f14 dt" style="left:1421.7px;top:672.50px;">2026-01-07 19:27:15</span>
<div class="a" style="left:123px;top:441px;width:1px;height:238px;background:#ebedf5"></div>
<span class="t f14 bl" style="left:1669px;top:650.50px;">添加备注</span>
<div class="a" style="left:1683px;top:387.500px;width:8px;height:8px;background:#fff;border:1px solid #e4e7ed;transform:rotate(45deg);box-sizing:border-box"></div>
<div class="a" style="left:1593.700px;top:391.500px;width:185.500px;height:274.500px;background:#fff;border:1px solid #e4e7ed;border-radius:4px;box-sizing:border-box;box-shadow:0 2px 12px rgba(0,0,0,.12);overflow:hidden"><div class="a" style="left:0;top:64px;width:183px;height:34px;background:#f5f7fa"></div><div class="a" style="left:176.300px;top:119px;width:5.700px;height:153px;background:#e2e4eb;border-radius:3px"></div></div>
<div class="a" style="left:1684px;top:389.500px;width:6px;height:6px;background:#fff;transform:rotate(45deg)"></div>
<div class="a" style="left:1595px;top:392.500px;width:170px;height:28px;overflow:hidden"><span class="t f14" style="left:19.800px;top:2.70px;color:#4c5160">客户代码<span class="ar">↓</span></span></div>
<span class="t f14" style="left:1614.2px;top:429.05px;color:#4c5160">客户代码<span class="ar"><span class="ar">↑</span></span></span>
<span class="t f14" style="left:1614.2px;top:462.90px;color:#4c5160">商品SKU<span class="ar"><span class="ar">↓</span></span></span>
<span class="t f14" style="left:1614.2px;top:496.75px;color:#4c5160">商品SKU<span class="ar"><span class="ar">↑</span></span></span>
<span class="t f14" style="left:1614.2px;top:530.60px;color:#4c5160">商品种数<span class="ar"><span class="ar">↓</span></span></span>
<span class="t f14" style="left:1614.2px;top:564.45px;color:#4c5160">商品种数<span class="ar"><span class="ar">↑</span></span></span>
<span class="t f14" style="left:1614.2px;top:598.30px;color:#4c5160">商品件数<span class="ar"><span class="ar">↓</span></span></span>
<span class="t f14" style="left:1614.2px;top:632.15px;color:#4c5160">商品件数<span class="ar"><span class="ar">↑</span></span></span>
<div class="a" style="left:1771.300px;top:664px;width:5.700px;height:15px;background:#e2e4eb"></div>
<div class="a" style="left:1673px;top:466px;width:8px;height:8px;background:#303133;transform:rotate(45deg)"></div>
<div class="a" style="left:1436.200px;top:454.500px;width:240.800px;height:31.500px;background:#303133;border-radius:4px"></div>
<span class="t " style="left:1448.8px;top:460.20px;font-size:12px;color:#fff;letter-spacing:-.08px">订单有多个SKU时，按照第一个SKU排序</span>
<svg class="a" style="left:1690px;top:464.500px" width="12" height="12" viewBox="0 0 12 12"><circle cx="6" cy="6" r="6" fill="#8a93a5"/><path d="M4.300 4.700a1.750 1.750 0 1 1 2.600 1.500c-.6.400-.9.700-.9 1.300" fill="none" stroke="#fff" stroke-width="1.100" stroke-linecap="round"/><circle cx="6" cy="9.300" r=".7" fill="#fff"/></svg>
<svg class="a" style="left:1380px;top:440px" width="426" height="100" viewBox="1380 440 426 100"><ellipse cx="1609.800" cy="489.400" rx="213.700" ry="39.300" fill="none" stroke="#e8251b" stroke-width="2.800" transform="rotate(.45 1609.8 489.4)"/></svg>
<span class="t" style="left:1690.100px;top:636.300px;height:44px;line-height:44px;font-size:34px;font-weight:700;color:#ff0000;transform-origin:0 50%;transform:scaleX(.725);-webkit-text-stroke:1.500px #ff0000;letter-spacing:.5px">cxy5.com</span>
</div></body></html>
